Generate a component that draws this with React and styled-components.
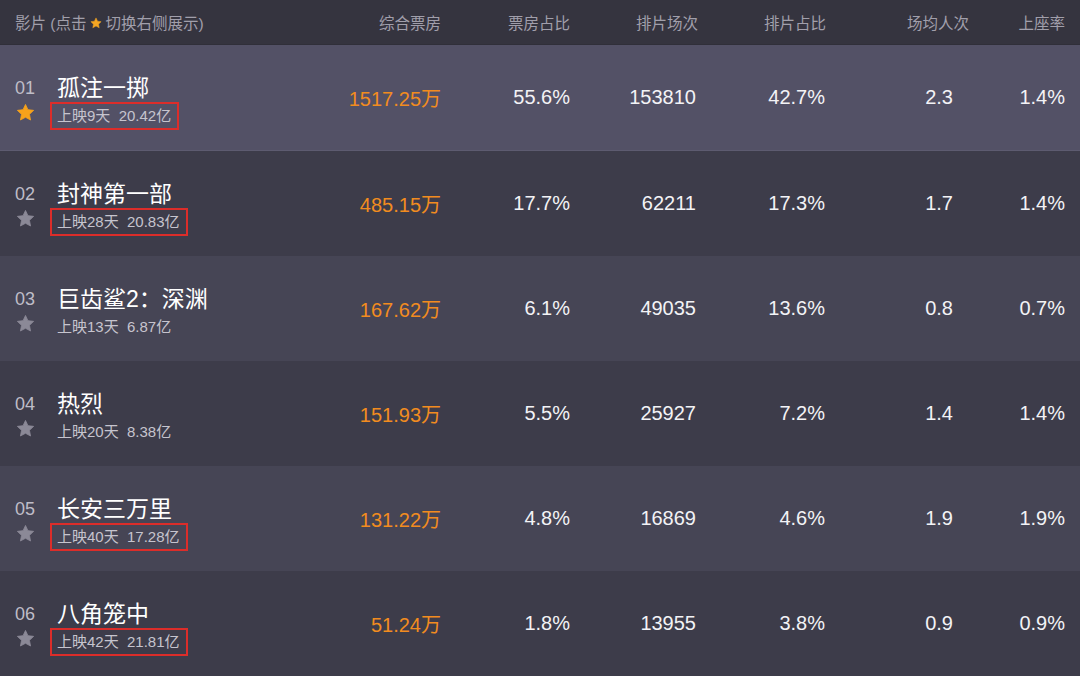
import React from 'react';
import styled, { createGlobalStyle } from 'styled-components';

const GlobalStyle = createGlobalStyle`
  html, body {
    margin: 0;
    padding: 0;
    background: #3d3c4a;
  }

  body {
    font-family: 'Liberation Sans', 'Noto Sans CJK SC', sans-serif;
    -webkit-font-smoothing: antialiased;
  }
`;

const COLUMNS = '300px 141px 129px 128px 128px 143px 96px';

const Table = styled.div`
  width: 1080px;
  height: 676px;
  overflow: hidden;
  display: flex;
  flex-direction: column;
`;

const HeaderRow = styled.div`
  height: 45px;
  flex-shrink: 0;
  display: grid;
  grid-template-columns: ${COLUMNS};
  padding-right: 15px;
  align-items: center;
  background: #35343f;
  border-bottom: 1px solid #302f39;
  box-sizing: border-box;
`;

const HeaderCell = styled.div`
  font-size: 15.5px;
  color: #a19fab;
  padding-left: ${({ $left }) => ($left ? '15px' : '0')};
  white-space: nowrap;
  display: flex;
  align-items: center;
  justify-content: ${({ $left }) => ($left ? 'flex-start' : 'flex-end')};
`;

const HeaderStar = styled.span`
  display: inline-flex;
  margin: 2px 3px 0 4px;
`;

const Row = styled.div`
  flex: 1;
  display: grid;
  grid-template-columns: ${COLUMNS};
  padding-right: 15px;
  align-items: center;
  background: ${({ $tone }) =>
    $tone === 'active' ? '#535166' : $tone === 'odd' ? '#464555' : '#3d3c4a'};
  border-bottom: ${({ $tone }) =>
    $tone === 'active' ? '1px solid #5d5b70' : 'none'};
  box-sizing: border-box;
`;

const Film = styled.div`
  align-self: start;
  padding: 29px 0 0 15px;
  display: flex;
`;

const Rank = styled.div`
  width: 42px;
  display: flex;
  flex-direction: column;
`;

const RankNum = styled.div`
  font-size: 18px;
  line-height: 28px;
  color: #bfbdc8;
`;

const RankStar = styled.div`
  display: flex;
  margin-top: 1px;
  margin-left: 1px;
`;

const Info = styled.div`
  display: flex;
  flex-direction: column;
  align-items: flex-start;
`;

const Title = styled.div`
  font-size: 23px;
  line-height: 28px;
  color: #ffffff;
  white-space: nowrap;
`;

const Sub = styled.div`
  font-size: 15px;
  line-height: 24px;
  color: #c6c4ce;
  white-space: pre;
  box-sizing: border-box;
  border: 2px solid ${({ $marked }) => ($marked ? '#dc2d2a' : 'transparent')};
  padding: 0 6px 0 5px;
  margin: 0 0 0 -7px;
`;

const Value = styled.div`
  font-size: 20px;
  text-align: right;
  color: ${({ $accent }) => ($accent ? '#f28c1f' : '#f3f3f6')};
  padding-right: ${({ $pad }) => $pad || 0}px;
  white-space: nowrap;
`;

const Star = ({ size = 19, color }) => (
  <svg width={size} height={size} viewBox="0 0 24 24">
    <path
      d="M12 1.8l3.1 6.6 7.2.9-5.3 5 1.4 7.2L12 18l-6.4 3.5 1.4-7.2-5.3-5 7.2-.9z"
      fill={color}
      stroke={color}
      strokeWidth="1"
      strokeLinejoin="round"
    />
  </svg>
);

const films = [
  { rank: '01', name: '孤注一掷', days: 9, total: '20.42亿', box: '1517.25万', share: '55.6%', shows: '153810', showShare: '42.7%', avg: '2.3', seat: '1.4%', marked: true, active: true },
  { rank: '02', name: '封神第一部', days: 28, total: '20.83亿', box: '485.15万', share: '17.7%', shows: '62211', showShare: '17.3%', avg: '1.7', seat: '1.4%', marked: true },
  { rank: '03', name: '巨齿鲨2：深渊', days: 13, total: '6.87亿', box: '167.62万', share: '6.1%', shows: '49035', showShare: '13.6%', avg: '0.8', seat: '0.7%' },
  { rank: '04', name: '热烈', days: 20, total: '8.38亿', box: '151.93万', share: '5.5%', shows: '25927', showShare: '7.2%', avg: '1.4', seat: '1.4%' },
  { rank: '05', name: '长安三万里', days: 40, total: '17.28亿', box: '131.22万', share: '4.8%', shows: '16869', showShare: '4.6%', avg: '1.9', seat: '1.9%', marked: true },
  { rank: '06', name: '八角笼中', days: 42, total: '21.81亿', box: '51.24万', share: '1.8%', shows: '13955', showShare: '3.8%', avg: '0.9', seat: '0.9%', marked: true },
];

const App = () => (
  <>
    <GlobalStyle />
    <Table>
      <HeaderRow>
        <HeaderCell $left>
          影片 (点击
          <HeaderStar>
            <Star size={12} color="#f5a623" />
          </HeaderStar>
          切换右侧展示)
        </HeaderCell>
        <HeaderCell>综合票房</HeaderCell>
        <HeaderCell>票房占比</HeaderCell>
        <HeaderCell>排片场次</HeaderCell>
        <HeaderCell>排片占比</HeaderCell>
        <HeaderCell>场均人次</HeaderCell>
        <HeaderCell>上座率</HeaderCell>
      </HeaderRow>

      {films.map((film, i) => (
        <Row key={film.rank} $tone={film.active ? 'active' : i % 2 === 0 ? 'odd' : 'even'}>
          <Film>
            <Rank>
              <RankNum>{film.rank}</RankNum>
              <RankStar>
                <Star color={film.active ? '#f7a21b' : '#8b8997'} />
              </RankStar>
            </Rank>
            <Info>
              <Title>{film.name}</Title>
              <Sub $marked={film.marked}>
                {`上映${film.days}天  ${film.total}`}
              </Sub>
            </Info>
          </Film>
          <Value $accent>{film.box}</Value>
          <Value>{film.share}</Value>
          <Value $pad={2}>{film.shows}</Value>
          <Value $pad={1}>{film.showShare}</Value>
          <Value $pad={16}>{film.avg}</Value>
          <Value>{film.seat}</Value>
        </Row>
      ))}
    </Table>
  </>
);

export default App;
